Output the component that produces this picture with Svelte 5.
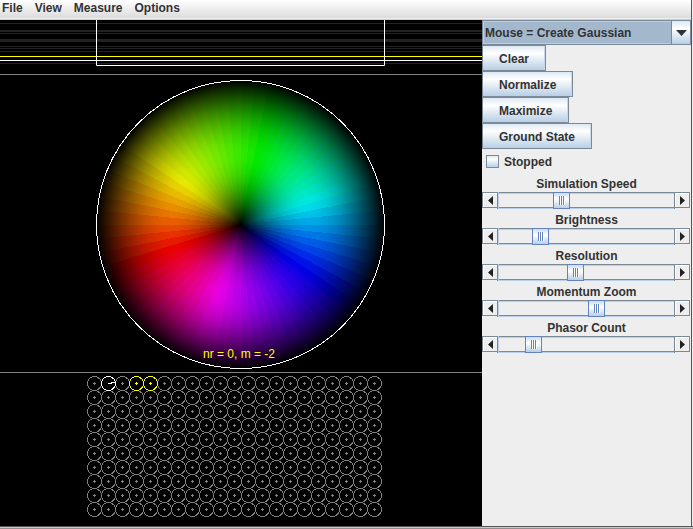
<script>
  const menus = ['File', 'View', 'Measure', 'Options'];
  const actions = ['Clear', 'Normalize', 'Maximize', 'Ground State'];

  let mode = $state('Mouse = Create Gaussian');
  let stopped = $state(false);
  let sliders = $state([
    { id: 'speed', label: 'Simulation Speed', value: 56 },
    { id: 'brightness', label: 'Brightness', value: 35 },
    { id: 'resolution', label: 'Resolution', value: 70 },
    { id: 'zoom', label: 'Momentum Zoom', value: 91 },
    { id: 'phasors', label: 'Phasor Count', value: 28 }
  ]);

  // Energy levels of the upper strip: [y, thickness]
  const levels = [[3, 1], [10, 2], [13, 1], [19, 3], [26, 1], [28, 1], [31, 1], [43, 1]];

  // Phase colour wheel, angles clockwise from the top
  const hues = [
    [-54, [232, 232, 0]],
    [15, [0, 232, 0]],
    [73, [0, 232, 232]],
    [125, [0, 0, 232]],
    [197, [232, 0, 232]],
    [250, [232, 0, 0]],
    [306, [232, 232, 0]]
  ];
  const R = 144;
  const N = 64;

  function colorAt(deg) {
    const a = deg > 306 ? deg - 360 : deg;
    for (let i = 0; i < hues.length - 1; i++) {
      const [a0, c0] = hues[i];
      const [a1, c1] = hues[i + 1];
      if (a >= a0 && a <= a1) {
        const t = (a - a0) / (a1 - a0);
        return `rgb(${c0.map((c, k) => Math.round(c + (c1[k] - c) * t)).join(',')})`;
      }
    }
    return '#000';
  }

  const wedges = Array.from({ length: N }, (_, i) => {
    const step = 360 / N;
    const p = (d) => {
      const r = (d * Math.PI) / 180;
      return `${(R * Math.sin(r)).toFixed(2)} ${(-R * Math.cos(r)).toFixed(2)}`;
    };
    return {
      d: `M0 0L${p(i * step)}L${p((i + 1) * step + 0.5)}Z`,
      fill: colorAt((i + 0.5) * step)
    };
  });

  // Bessel function J1 by its power series
  function j1(x) {
    let term = x / 2;
    let sum = term;
    for (let k = 1; k < 20; k++) {
      term *= -(x * x) / 4 / (k * (k + 1));
      sum += term;
    }
    return sum;
  }
  const shade = Array.from({ length: 41 }, (_, i) => {
    const r = i / 40;
    const v = Math.min(1, Math.max(0, j1(3.8317 * r) / 0.5819));
    return { offset: r, opacity: 1 - Math.pow(v, 0.95) };
  });

  const phasors = Array.from({ length: 210 }, (_, i) => ({
    x: 94 + (i % 21) * 14,
    y: 363 + Math.floor(i / 21) * 14,
    kind: i === 1 ? 'active' : i === 3 || i === 4 ? 'marked' : 'idle'
  }));
  const ordered = [...phasors.filter((p) => p.kind === 'idle'), ...phasors.filter((p) => p.kind !== 'idle')];
</script>

<div class="window">
  <nav class="menubar">
    {#each menus as m}
      <button type="button">{m}</button>
    {/each}
  </nav>

  <div class="body">
    <main class="stage">
      <div class="strip">
        {#each levels as [y, h]}
          <i style="top: {y}px; height: {h}px"></i>
        {/each}
        <i class="yellow"></i>
        <i class="white"></i>
        <i class="divider"></i>
      </div>
      <i class="divider lower"></i>
      <svg class="plot" viewBox="0 0 482 506" width="482" height="506">
        <defs>
          <radialGradient id="shade" gradientUnits="userSpaceOnUse" cx="0" cy="0" r={R}>
            {#each shade as s}
              <stop offset={s.offset} stop-color="#000" stop-opacity={s.opacity} />
            {/each}
          </radialGradient>
        </defs>
        <path class="well" d="M96.5 0V45.500H384.500V0" />
        <g transform="translate(240.5 204.5)" shape-rendering="crispEdges">
          {#each wedges as w}
            <path d={w.d} fill={w.fill} />
          {/each}
          <circle r={R} fill="url(#shade)" />
          <circle r={R} fill="none" stroke="#fff" />
        </g>
        <text x="203" y="338">nr = 0, m = -2</text>
        {#each ordered as p}
          <g class={p.kind} transform="translate({p.x} {p.y})" shape-rendering="crispEdges">
            <circle cx=".5" cy=".5" r="7" fill="none" />
            {#if p.kind === 'active'}
              <path d="M0 .5H4M3-.5H7" />
            {:else}
              <path d="M-1 .5H2M.5-1V2" />
            {/if}
          </g>
        {/each}
      </svg>
    </main>

    <aside class="panel">
      <div class="combo">
        <select bind:value={mode} aria-label="Mouse action">
          <option>Mouse = Create Gaussian</option>
          <option>Mouse = Rotate Function</option>
        </select>
        <span class="drop">
          <svg width="11" height="6" viewBox="0 0 11 6"><path d="M0 0H11L5.5 6Z" fill="#333" /></svg>
        </span>
      </div>
      {#each actions as a}
        <button type="button" class="action">{a}</button>
      {/each}
      <label class="check"><input type="checkbox" bind:checked={stopped} />Stopped</label>
      {#each sliders as s}
        <label class="caption" for={s.id}>{s.label}</label>
        <div class="scroll">
          <button type="button" class="left" aria-label="Decrease {s.label}" onclick={() => (s.value = Math.max(0, s.value - 1))}>
            <svg width="5" height="9" viewBox="0 0 5 9"><path d="M5 0V9L0 4.500Z" fill="#222" /></svg>
          </button>
          <input id={s.id} type="range" min="0" max="161" bind:value={s.value} />
          <button type="button" class="right" aria-label="Increase {s.label}" onclick={() => (s.value = Math.min(161, s.value + 1))}>
            <svg width="5" height="9" viewBox="0 0 5 9"><path d="M0 0V9L5 4.500Z" fill="#222" /></svg>
          </button>
        </div>
      {/each}
    </aside>
  </div>
</div>

<style>
  :global(body) {
    margin: 0;
    background: #eee;
  }
  .window {
    display: flex;
    flex-direction: column;
    box-sizing: border-box;
    height: 100vh;
    min-height: 529px;
    padding-right: 2px;
    background: linear-gradient(#555, #555) right 1px top 0 / 1px 100% no-repeat #eee;
    border-bottom: 1px solid #958d8f;
    box-shadow: inset 0 -1px #d0c6c8, inset 0 -2px #555;
    font: bold 12px/16px 'Liberation Sans', Arial, sans-serif;
    color: #333;
  }
  button, select, input {
    font: inherit;
    color: inherit;
    margin: 0;
    border-radius: 0;
  }
  .menubar {
    display: flex;
    gap: 12px;
    box-sizing: border-box;
    height: 20px;
    padding-left: 2px;
    background: linear-gradient(#fff, #dadada);
    border-bottom: 1px solid #ccc;
    box-shadow: inset 0 -1px #eee;
  }
  .menubar button {
    padding: 0;
    border: 0;
    height: 16px;
    background: none;
  }
  .body {
    display: flex;
    flex: 1;
    margin-bottom: 2px;
  }
  .stage {
    position: relative;
    flex: 1;
    min-width: 482px;
    background: #000;
    overflow: hidden;
  }
  .strip i, .divider {
    position: absolute;
    left: 0;
    right: 0;
    height: 1px;
    background: #222;
  }
  .strip .yellow {
    top: 36px;
    background: #ff0;
  }
  .strip .white {
    top: 40px;
    background: #fff;
  }
  .strip .divider {
    top: 54px;
    background: #808080;
  }
  .divider.lower {
    top: 352px;
    background: #808080;
  }
  .plot {
    position: relative;
    display: block;
    margin: 0 auto;
  }
  .well {
    fill: none;
    stroke: #fff;
  }
  .plot text {
    font: 12px 'Liberation Sans', Arial, sans-serif;
    fill: #ff0;
  }
  .idle { stroke: #808080; }
  .marked { stroke: #ff0; }
  .active { stroke: #fff; }

  .panel {
    display: flex;
    flex-direction: column;
    align-items: flex-start;
    box-sizing: border-box;
    width: 209px;
    flex: none;
    background: #eee;
  }
  .combo {
    display: flex;
    position: relative;
    box-sizing: border-box;
    align-self: stretch;
    height: 25px;
    border: 1px solid #7a8a99;
  }
  .combo select {
    appearance: none;
    flex: 1;
    padding: 0 20px 0 1px;
    border: 1px solid #b8cfe5;
    background: #a3b8cc;
    outline: none;
  }
  .drop {
    position: absolute;
    top: 0;
    right: 0;
    bottom: 0;
    display: grid;
    place-items: center;
    width: 18px;
    border-left: 1px solid #7a8a99;
    background: linear-gradient(#dde8f3, #fff 35%, #b8cfe5);
    pointer-events: none;
  }
  .action {
    height: 26px;
    padding: 2px 16px 0;
    border: 1px solid #7a8a99;
    background: linear-gradient(#dde8f3, #fff 30%, #b8cfe5);
    box-shadow: inset -1px 0 #c8d8e8;
  }
  .check {
    display: flex;
    align-items: center;
    gap: 5px;
    height: 25px;
    padding-left: 4px;
  }
  .check input {
    appearance: none;
    box-sizing: border-box;
    width: 13px;
    height: 13px;
    border: 1px solid #7a8a99;
    background: linear-gradient(#dde8f3, #fff 30%, #b8cfe5);
  }
  .check input:checked {
    background: #7a8a99;
  }
  .caption {
    align-self: stretch;
    padding-top: 2px;
    text-align: center;
  }
  .scroll {
    display: flex;
    align-self: stretch;
    box-sizing: border-box;
    height: 17px;
    margin: 0 1px 1px 0;
  }
  .scroll button {
    display: grid;
    place-items: center;
    box-sizing: border-box;
    width: 15px;
    height: 16px;
    padding: 0;
    border: 1px solid #7a8a99;
    border-width: 1px 0 1px 1px;
    background: #eee;
    box-shadow: inset 1px 1px #fff;
  }
  .scroll .right {
    border-width: 1px 1px 1px 0;
  }
  .scroll input {
    appearance: none;
    flex: 1;
    min-width: 0;
    height: 17px;
    background: linear-gradient(#7a8a99, #7a8a99) 0 0 / 100% 1px no-repeat,
      linear-gradient(#7a8a99, #7a8a99) 0 15px / 100% 1px no-repeat,
      linear-gradient(#b8cfe5, #b8cfe5) 0 1px / 100% 1px no-repeat,
      linear-gradient(#b8cfe5, #b8cfe5) 0 16px / 100% 1px no-repeat, #eee;
    box-shadow: inset 1px 0 #7a8a99, inset 2px 0 #b8cfe5, inset -1px 0 #7a8a99;
    outline: none;
  }
  .scroll input::-webkit-slider-thumb {
    appearance: none;
    box-sizing: border-box;
    width: 17px;
    height: 17px;
    border: 1px solid #6382bf;
    background:
      repeating-linear-gradient(90deg, #6382bf 0 1px, #fff 1px 2px) 5px 3px / 6px 9px no-repeat,
      linear-gradient(#c8dcf0, #fff 40%, #b8cfe5);
  }
</style>
